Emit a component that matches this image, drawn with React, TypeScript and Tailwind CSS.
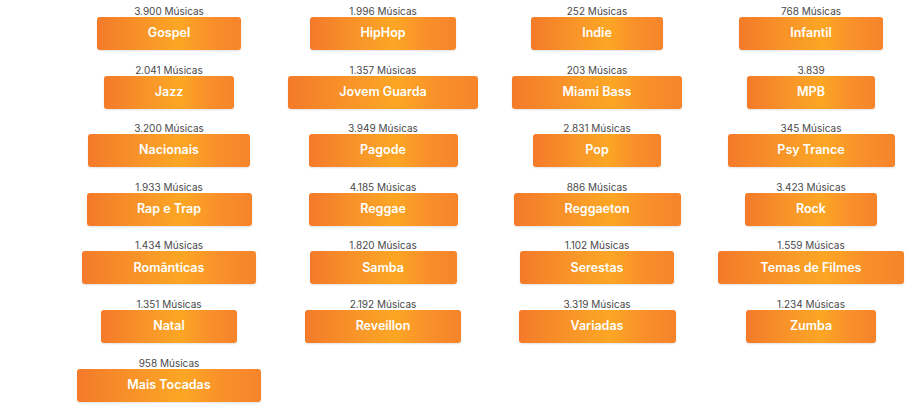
const GENRES = [
  { name: 'Gospel', count: '3.900 Músicas', w: 'w-[144px]' },
  { name: 'HipHop', count: '1.996 Músicas', w: 'w-[146px]' },
  { name: 'Indie', count: '252 Músicas', w: 'w-[132px]' },
  { name: 'Infantil', count: '768 Músicas', w: 'w-[144px]' },
  { name: 'Jazz', count: '2.041 Músicas', w: 'w-[130px]' },
  { name: 'Jovem Guarda', count: '1.357 Músicas', w: 'w-[190px]' },
  { name: 'Miami Bass', count: '203 Músicas', w: 'w-[170px]' },
  { name: 'MPB', count: '3.839', w: 'w-[128px]' },
  { name: 'Nacionais', count: '3.200 Músicas', w: 'w-[162px]' },
  { name: 'Pagode', count: '3.949 Músicas', w: 'w-[149px]' },
  { name: 'Pop', count: '2.831 Músicas', w: 'w-[128px]' },
  { name: 'Psy Trance', count: '345 Músicas', w: 'w-[167px]' },
  { name: 'Rap e Trap', count: '1.933 Músicas', w: 'w-[165px]' },
  { name: 'Reggae', count: '4.185 Músicas', w: 'w-[149px]' },
  { name: 'Reggaeton', count: '886 Músicas', w: 'w-[167px]' },
  { name: 'Rock', count: '3.423 Músicas', w: 'w-[132px]' },
  { name: 'Românticas', count: '1.434 Músicas', w: 'w-[174px]' },
  { name: 'Samba', count: '1.820 Músicas', w: 'w-[147px]' },
  { name: 'Serestas', count: '1.102 Músicas', w: 'w-[154px]' },
  { name: 'Temas de Filmes', count: '1.559 Músicas', w: 'w-[186px]' },
  { name: 'Natal', count: '1.351 Músicas', w: 'w-[136px]' },
  { name: 'Reveillon', count: '2.192 Músicas', w: 'w-[156px]' },
  { name: 'Variadas', count: '3.319 Músicas', w: 'w-[157px]' },
  { name: 'Zumba', count: '1.234 Músicas', w: 'w-[130px]' },
  { name: 'Mais Tocadas', count: '958 Músicas', w: 'w-[184px]' },
];

export default function App() {
  return (
    <div className="min-h-[416px] w-[922px] bg-white pt-[5px] font-['Inter',sans-serif]">
      <div className="ml-[62px] grid w-[856px] grid-cols-4 gap-y-[13.6px]">
        {GENRES.map((g) => (
          <div key={g.name} className="flex flex-col items-center">
            <span className="text-[10px] leading-[12px] text-[#4a4a4a]">{g.count}</span>
            <button
              className={`${g.w} h-[33px] rounded-[3px] bg-[linear-gradient(90deg,#f47a2a_0%,#f99a28_40%,#fca624_58%,#f98f2b_80%,#f6842b_100%)] text-[12.5px] font-semibold text-white shadow-[0_1px_2px_rgba(0,0,0,0.12)]`}
            >
              {g.name}
            </button>
          </div>
        ))}
      </div>
    </div>
  );
}
